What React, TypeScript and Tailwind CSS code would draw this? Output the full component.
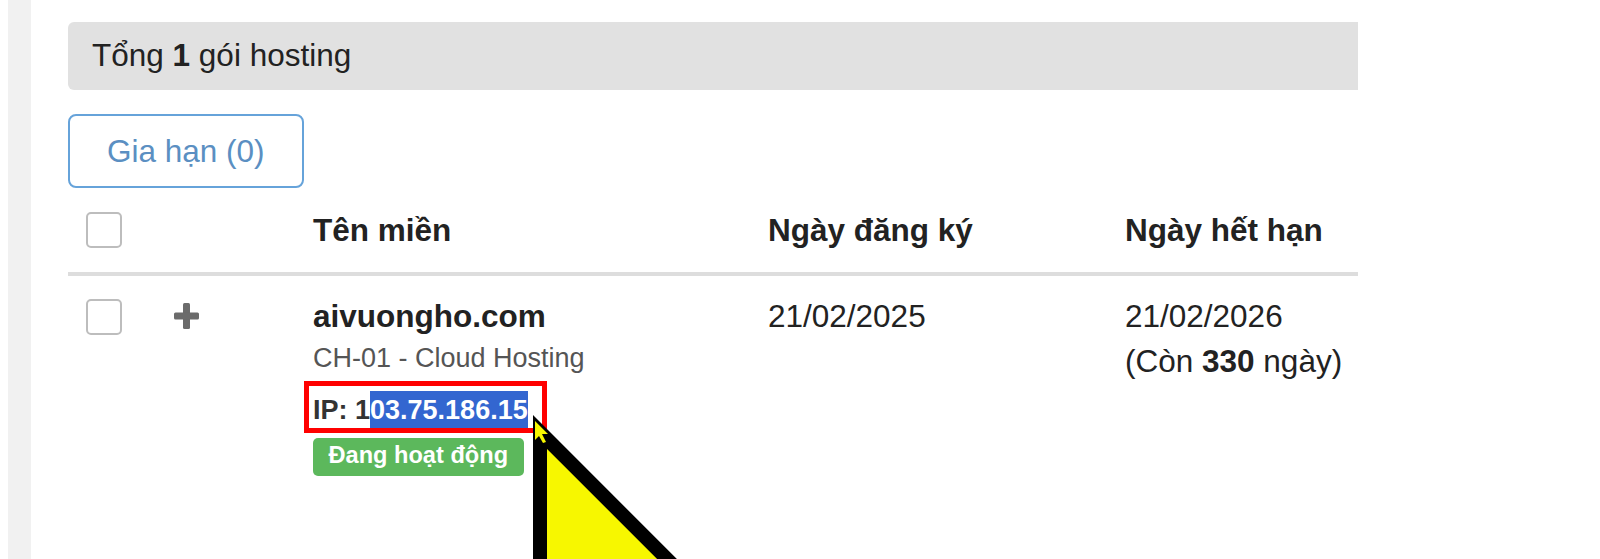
import React from "react";

function PlusIcon() {
  return (
    <svg width="25" height="26" viewBox="0 0 25 26" className="block">
      <rect x="9" y="0" width="7" height="26" rx="1.5" fill="#6b6b6b" />
      <rect x="0" y="9.5" width="25" height="7" rx="1.5" fill="#6b6b6b" />
    </svg>
  );
}

function Box() {
  return <div className="h-[36px] w-[36px] rounded-[5px] border-2 border-[#bdbdbd] bg-white" />;
}

export default function App() {
  return (
    <div className="relative flex h-[559px] w-[1600px] overflow-hidden bg-white font-['Liberation_Sans',Arial,sans-serif] text-[#222]">
      <div className="w-[8px] shrink-0" />
      <div className="w-[23px] shrink-0 bg-[#f1f1f1]" />
      <div className="w-[37px] shrink-0" />
      <div className="w-[1290px] shrink-0 overflow-hidden">
        <div className="w-[1500px] pt-[22px]">
          <div className="flex h-[68px] items-center rounded-[6px] bg-[#e1e1e1] px-[24px] text-[31.5px]">
            <span>
              Tổng <b>1</b> gói hosting
            </span>
          </div>
          <div className="mt-[24px]">
            <button className="rounded-[8px] border-2 border-[#66a3da] bg-white px-[37px] py-[12.5px] text-[31.5px] leading-[45px] text-[#5b8fc2]">
              Gia hạn (0)
            </button>
          </div>
          <div className="grid grid-cols-[88px_139px_455px_357px_1fr]">
            <div className="flex items-center px-[18px] py-[19.5px]">
              <Box />
            </div>
            <div className="px-[18px] py-[19.5px]" />
            <div className="px-[18px] py-[19.5px] text-[31.5px] font-bold leading-[45px]">Tên miền</div>
            <div className="px-[18px] py-[19.5px] text-[31.5px] font-bold leading-[45px]">Ngày đăng ký</div>
            <div className="px-[18px] py-[19.5px] text-[31.5px] font-bold leading-[45px]">Ngày hết hạn</div>
          </div>
          <div className="h-[4px] bg-[#dddddd]" />
          <div className="grid grid-cols-[88px_139px_455px_357px_1fr]">
            <div className="px-[18px] pt-[23px]">
              <Box />
            </div>
            <div className="px-[18px] pt-[27px]">
              <PlusIcon />
            </div>
            <div className="px-[18px] pt-[18px]">
              <div className="text-[31.5px] font-bold leading-[45px]">aivuongho.com</div>
              <div className="text-[27px] leading-[38px] text-[#555]">CH-01 - Cloud Hosting</div>
              <div className="relative mt-[14px] h-[40px] text-[27px] font-bold leading-[38px] text-[#333]">
                <span>
                  IP: 1<span className="inline-block bg-[#3366d0] text-white">03.75.186.15</span>
                </span>
                <div className="absolute left-[-9px] top-[-10px] h-[52px] w-[243px] border-[5px] border-[#ff0000]" />
              </div>
              <div className="mt-[7px]">
                <span className="inline-block rounded-[5px] bg-[#5cb85c] px-[15.5px] pb-[8.5px] pt-[5.5px] text-[23.6px] font-bold leading-none text-white">
                  Đang hoạt động
                </span>
              </div>
            </div>
            <div className="px-[18px] pt-[18px] text-[31.5px] leading-[45px]">21/02/2025</div>
            <div className="px-[18px] pt-[18px] text-[31.5px] leading-[45px]">
              <div>21/02/2026</div>
              <div>
                (Còn <b>330</b> ngày)
              </div>
            </div>
          </div>
        </div>
      </div>
      <svg
        className="absolute left-[480px] top-[380px] overflow-visible"
        width="240"
        height="179"
        viewBox="0 0 240 179"
      >
        <polygon
          points="60,52 60,360 368,360"
          fill="#f7f700"
          stroke="#000"
          strokeWidth="14"
          strokeLinejoin="miter"
          strokeMiterlimit="10"
        />
        <polygon points="55,41 55,60 59,56 63,63 66,62 62,54 68,54" fill="#f7f700" />
      </svg>
    </div>
  );
}
